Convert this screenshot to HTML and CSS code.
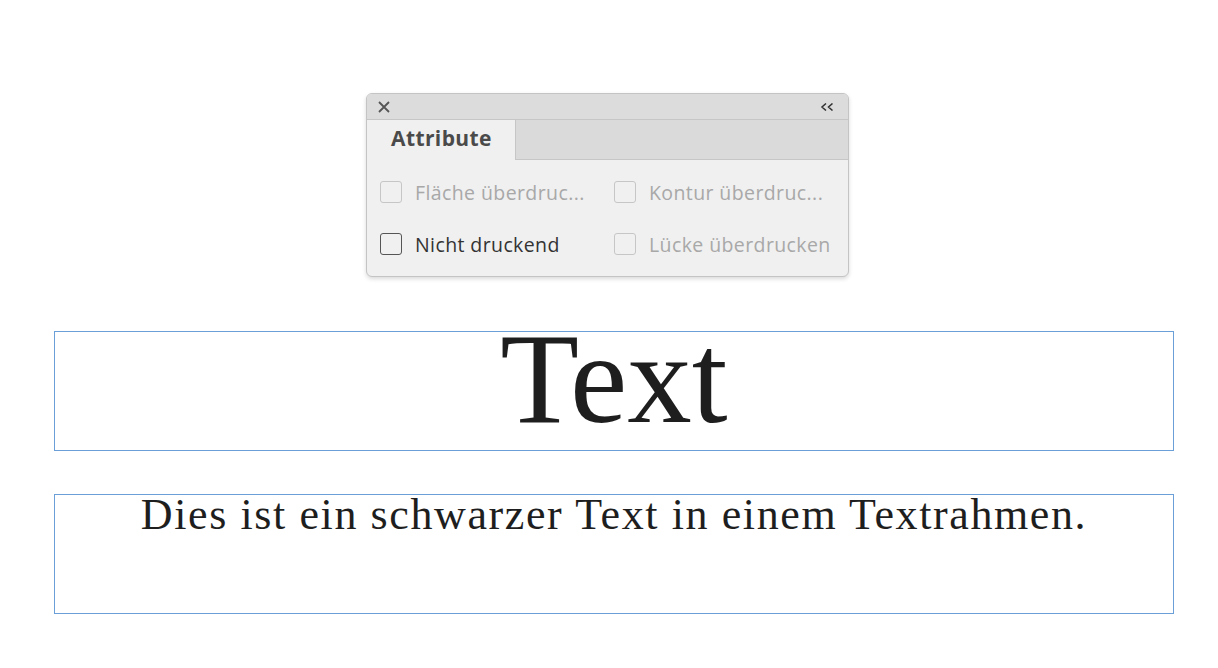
FILE: index.html
```html
<!DOCTYPE html>
<html lang="de">
<head>
    <meta charset="UTF-8">
    <title>Attribute</title>
    <link rel="stylesheet" href="styles.css">
</head>
<body>
    <!-- Attribute panel -->
    <div class="panel">
        <div class="panel-titlebar">
            <svg class="icon-close" width="12" height="12" viewBox="0 0 12 12">
                <path d="M1 1 L11 11 M11 1 L1 11" stroke="#555" stroke-width="1.8" fill="none"/>
            </svg>
            <svg class="icon-collapse" width="14" height="8" viewBox="0 0 14 8">
                <path d="M6 0.5 L2 4 L6 7.5 M12.5 0.5 L8.5 4 L12.5 7.5" stroke="#333" stroke-width="1.5" fill="none"/>
            </svg>
        </div>
        <div class="panel-tabs">
            <div class="tab active">Attribute</div>
            <div class="tab-rest"></div>
        </div>
        <div class="panel-body">
            <label class="option disabled"><span class="box"></span>Fläche überdruc...</label>
            <label class="option disabled"><span class="box"></span>Kontur überdruc...</label>
            <label class="option"><span class="box"></span>Nicht druckend</label>
            <label class="option disabled"><span class="box"></span>Lücke überdrucken</label>
        </div>
    </div>

    <!-- Text frames -->
    <div class="frame frame-big">Text</div>
    <div class="frame frame-small">Dies ist ein schwarzer Text in einem Textrahmen.</div>
</body>
</html>
```

FILE: styles.css
```css
body {
    margin: 0;
    background-color: #fff;
    font-family: "Open Sans", "Noto Sans", sans-serif;
}

.panel {
    width: 483px;
    margin: 93px 0 0 366px;
    box-sizing: border-box;
    border: 1px solid #c4c4c4;
    border-radius: 6px;
    background-color: #f0f0f0;
    box-shadow: 0 2px 4px rgba(0, 0, 0, 0.15);
    overflow: hidden;
}

.panel-titlebar {
    height: 25px;
    background-color: #dcdcdc;
    border-bottom: 1px solid #c6c6c6;
    display: flex;
    align-items: center;
    justify-content: space-between;
    padding: 0 14px 0 11px;
}

.panel-tabs {
    display: flex;
    height: 40px;
}

.tab {
    width: 149px;
    box-sizing: border-box;
    background-color: #f0f0f0;
    border-right: 1px solid #c6c6c6;
    color: #4a4a4a;
    font-weight: 700;
    font-size: 21px;
    letter-spacing: 0.4px;
    padding: 4px 0 0 24px;
}

.tab-rest {
    flex: 1;
    background-color: #dadada;
    border-bottom: 1px solid #c6c6c6;
}

.panel-body {
    display: grid;
    grid-template-columns: 234px 1fr;
    row-gap: 30px;
    padding: 21px 0 21px 13px;
}

.option {
    display: flex;
    align-items: center;
    gap: 13px;
    height: 22px;
    font-size: 19.5px;
    letter-spacing: 0.4px;
    color: #333;
    white-space: nowrap;
}

.box {
    width: 20px;
    height: 20px;
    border: 1.5px solid #555;
    border-radius: 3px;
}

.option.disabled {
    color: #a8a8a8;
}

.option.disabled .box {
    border-color: #c6c6c6;
}

.frame {
    width: 1120px;
    height: 120px;
    box-sizing: border-box;
    margin-left: 54px;
    border: 1px solid #6a9fd8;
    font-family: "Liberation Serif", serif;
    color: #1e1e1e;
    text-align: center;
}

.frame-big {
    margin-top: 54px;
    font-size: 129px;
    line-height: 93px;
}

.frame-small {
    margin-top: 43px;
    font-size: 44px;
    letter-spacing: 1.6px;
    line-height: 39px;
}
```
